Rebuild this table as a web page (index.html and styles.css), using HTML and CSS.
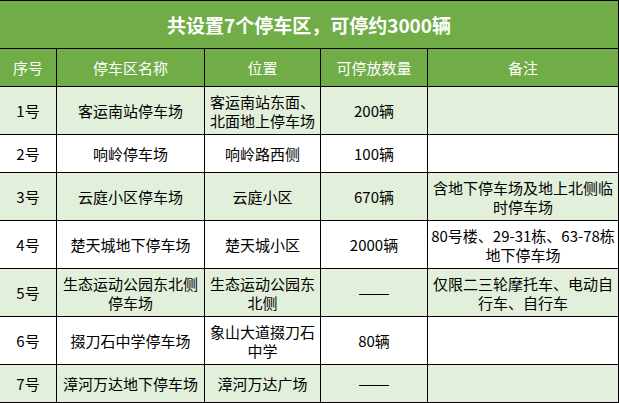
FILE: index.html
```html
<!DOCTYPE html>
<html lang="zh-CN">
<head>
<meta charset="utf-8">
<title>停车区</title>
<link rel="stylesheet" href="styles.css">
</head>
<body>
<div class="sheet">
  <div class="cell title">共设置7个停车区，可停约3000辆</div>

  <div class="cell head">序号</div>
  <div class="cell head">停车区名称</div>
  <div class="cell head">位置</div>
  <div class="cell head">可停放数量</div>
  <div class="cell head">备注</div>

  <div class="cell alt">1号</div>
  <div class="cell alt">客运南站停车场</div>
  <div class="cell alt">客运南站东面、北面地上停车场</div>
  <div class="cell alt">200辆</div>
  <div class="cell alt"></div>

  <div class="cell">2号</div>
  <div class="cell">响岭停车场</div>
  <div class="cell">响岭路西侧</div>
  <div class="cell">100辆</div>
  <div class="cell"></div>

  <div class="cell alt">3号</div>
  <div class="cell alt">云庭小区停车场</div>
  <div class="cell alt">云庭小区</div>
  <div class="cell alt">670辆</div>
  <div class="cell alt">含地下停车场及地上北侧临时停车场</div>

  <div class="cell">4号</div>
  <div class="cell">楚天城地下停车场</div>
  <div class="cell">楚天城小区</div>
  <div class="cell">2000辆</div>
  <div class="cell">80号楼、29-31栋、63-78栋地下停车场</div>

  <div class="cell alt">5号</div>
  <div class="cell alt">生态运动公园东北侧停车场</div>
  <div class="cell alt">生态运动公园东北侧</div>
  <div class="cell alt"><span class="dash">——</span></div>
  <div class="cell alt">仅限二三轮摩托车、电动自行车、自行车</div>

  <div class="cell">6号</div>
  <div class="cell">掇刀石中学停车场</div>
  <div class="cell">象山大道掇刀石中学</div>
  <div class="cell">80辆</div>
  <div class="cell"></div>

  <div class="cell alt">7号</div>
  <div class="cell alt">漳河万达地下停车场</div>
  <div class="cell alt">漳河万达广场</div>
  <div class="cell alt"><span class="dash">——</span></div>
  <div class="cell alt"></div>
</div>
</body>
</html>
```

FILE: styles.css
```css
html, body {
  margin: 0;
  padding: 0;
  background: #ffffff;
}

body {
  font-family: "Noto Sans CJK SC", "Noto Sans", sans-serif;
  color: #000000;
}

.sheet {
  width: 619px;
  height: 403px;
  box-sizing: border-box;
  display: grid;
  grid-template-columns: 56px 147px 115px 106px 190px;
  grid-template-rows: 47px 37px 47px 37px 47px 47px 47px 47px 37px;
  gap: 1px;
  padding: 1px 1px 1px 0;
  background: #000000;
}

.cell {
  display: flex;
  align-items: center;
  justify-content: center;
  text-align: center;
  background: #ffffff;
  font-size: 15px;
  line-height: 19px;
  padding: 0 2px;
  overflow: hidden;
}

.alt {
  background: #e2efda;
}

.head {
  background: #70ad47;
  color: #ffffff;
}

.title {
  grid-column: 1 / -1;
  background: #70ad47;
  color: #ffffff;
  font-size: 19px;
  font-weight: 700;
}

.dash {
  font-family: "Liberation Sans", sans-serif;
  font-size: 15px;
}
```
